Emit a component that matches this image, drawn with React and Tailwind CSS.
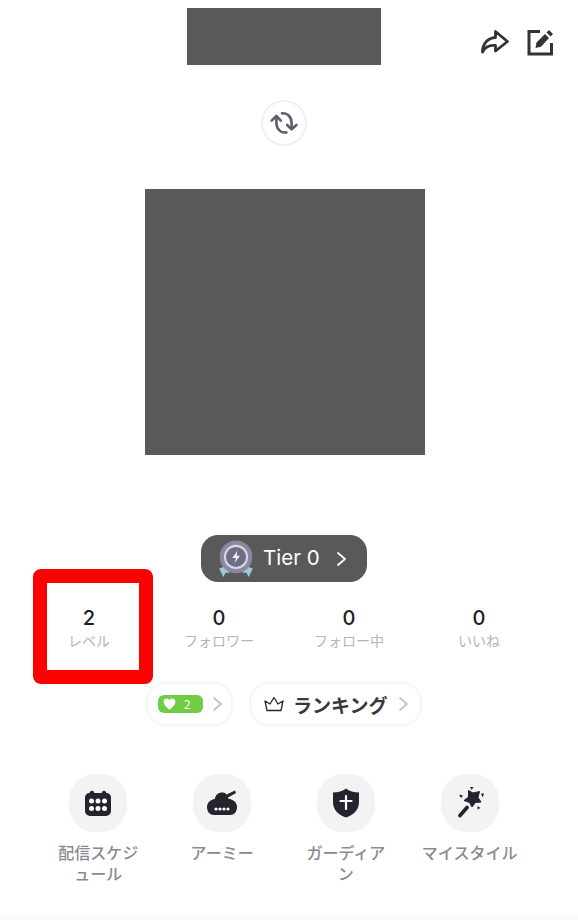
const jp = '"Noto Sans CJK JP", "Noto Sans", sans-serif'

const ShareIcon = () => (
  <svg width="30" height="26" viewBox="0 0 30 26" fill="none" stroke="#333333" strokeWidth="2.8" strokeLinejoin="round">
    <path d="M15.5 2.5 L27.5 12.5 L15.5 22 V16.5 C10 16 5 18 2.5 23 C2.5 14.5 8 9 15.5 8.5 Z" />
  </svg>
)

const EditIcon = () => (
  <svg width="28" height="28" viewBox="0 0 28 28" fill="none">
    <path d="M14 3.5 H3 V26 H25.5 V15" stroke="#333333" strokeWidth="3" />
    <path d="M9.5 20 L10.5 14.5 L19 6 L23 10 L15 18.8 Z" fill="#333333" />
    <path d="M20.5 4.5 L23 2 L27 6 L24.5 8.5 Z" fill="#333333" />
  </svg>
)

const SyncIcon = () => (
  <svg width="30" height="24" viewBox="0 0 30 24" fill="none" stroke="#5f5c6b" strokeWidth="2.6" strokeLinecap="round" strokeLinejoin="round">
    <path d="M13 2.4 C18 1.6 22.6 5.6 22.6 12 L22.6 17" />
    <path d="M18.2 14 L22.6 18.4 L27.4 14" />
    <path d="M17.4 21.4 C12 22.4 7.4 18 7.4 12 L7.4 6.5" />
    <path d="M2.6 9.6 L7.4 5 L11.8 9.6" />
  </svg>
)

const Medal = () => (
  <svg width="40" height="40" viewBox="0 0 38 38">
    <path d="M3 28 L9 26 L13 32 L9 32 L7 36 Z" fill="#9ccdd6" />
    <path d="M35 28 L29 26 L25 32 L29 32 L31 36 Z" fill="#9ccdd6" />
    <circle cx="19" cy="17" r="15.5" fill="#8b88a5" />
    <circle cx="19" cy="17" r="11.5" fill="#d8d7e2" />
    <circle cx="19" cy="17" r="9.5" fill="#6f6c86" />
    <path d="M20.5 11 L15.5 18 H19 L17.5 23 L22.8 15.8 H19.4 Z" fill="#f4f4f8" />
  </svg>
)

const Chevron = ({ className = '' }) => (
  <svg className={className} width="11" height="16" viewBox="0 0 11 16" fill="none" stroke="currentColor" strokeWidth="1.8" strokeLinecap="round" strokeLinejoin="round">
    <path d="M2 2 L9 8 L2 14" />
  </svg>
)

const CrownIcon = () => (
  <svg width="20" height="16" viewBox="0 0 20 16" fill="none" stroke="#26222e" strokeWidth="1.3" strokeLinejoin="round">
    <path d="M3 14.5 L1 5 L6 8 L10 1.5 L14 8 L19 5 L17 14.5 Z" />
  </svg>
)

const CalendarIcon = () => (
  <svg width="26" height="26" viewBox="0 0 26 26">
    <path d="M5 2 a2.2 2.2 0 0 1 4 0 L9.3 3 H16.7 L17 2 a2.2 2.2 0 0 1 4 0 L21.5 3 A4.5 4.5 0 0 1 26 7.5 V21 A5 5 0 0 1 21 26 H5 A5 5 0 0 1 0 21 V7.5 A4.5 4.5 0 0 1 4.5 3 Z" fill="#26222e" />
    {[6.5, 13, 19.5].map(x => [11, 18.5].map(y => (
      <circle key={`${x}-${y}`} cx={x} cy={y} r="2.5" fill="#ffffff" />
    )))}
  </svg>
)

const TankIcon = () => (
  <svg width="30" height="26" viewBox="0 0 30 26">
    <path d="M0 17 C0 11 6 8 15 8 C24 8 30 11 30 17 C30 22 27 25 23 25 H7 C3 25 0 22 0 17 Z" fill="#26222e" />
    <path d="M8 10 C8 4.5 11.5 2.5 15 2.5 C17 2.5 18.5 3 19.5 4.5 L28 0.5 L29 3 L21 7.5 V10.5 Z" fill="#26222e" />
    {[9, 13, 17, 21].map(x => (
      <circle key={x} cx={x} cy="19" r="1.6" fill="#ffffff" />
    ))}
  </svg>
)

const ShieldIcon = () => (
  <svg width="26" height="30" viewBox="0 0 26 30">
    <path d="M13 0.5 C16 3 21 4.5 26 4.5 V14 C26 22 20 27.5 13 29.5 C6 27.5 0 22 0 14 V4.5 C5 4.5 10 3 13 0.5 Z" fill="#26222e" />
    <path d="M13 8 V21 M7.5 13 H18.5" stroke="#ffffff" strokeWidth="2.2" strokeLinecap="round" />
  </svg>
)

const WandIcon = () => (
  <svg width="28" height="32" viewBox="0 0 28 32">
    <path d="M12.5 3.5 L17 6 L23.5 4.5 L22 10.5 L25 15 L19.5 15.5 L16 20 L13.5 15.5 L8 13.5 L12.5 10 Z" fill="#26222e" stroke="#26222e" strokeLinejoin="round" />
    <path d="M4 28.5 L11 20.5" stroke="#26222e" strokeWidth="3.8" strokeLinecap="round" />
    <path d="M14 0 H17.5 L15.7 3 Z" fill="#26222e" />
    <path d="M25 6.5 L28 6.5 L26.7 10.5 Z" fill="#26222e" />
    <path d="M3 7.5 L7 8.5 L5 11 Z" fill="#26222e" />
    <path d="M21.5 19 L24.5 21 L21.5 22.5 Z" fill="#26222e" />
  </svg>
)

const stats = [
  { value: 2, label: 'レベル' },
  { value: 0, label: 'フォロワー' },
  { value: 0, label: 'フォロー中' },
  { value: 0, label: 'いいね' },
]

const menus = [
  { label: '配信スケジュール', icon: <CalendarIcon />, width: 'w-[86px]' },
  { label: 'アーミー', icon: <TankIcon />, width: 'w-[86px]' },
  { label: 'ガーディアン', icon: <ShieldIcon />, width: 'w-[86px]' },
  { label: 'マイスタイル', icon: <WandIcon />, width: 'w-[100px]' },
]

export default function App() {
  return (
    <div className="relative h-[920px] w-[578px] overflow-hidden bg-white" style={{ fontFamily: jp }}>
      <div className="w-[568px]">
        {/* Header */}
        <div className="grid grid-cols-[1fr_194px_1fr] pt-2">
          <div />
          <div className="h-[57px] bg-[#595959]" />
          <div className="flex items-center justify-end gap-[16px] pr-[14px] pt-[11px]">
            <ShareIcon />
            <EditIcon />
          </div>
        </div>

        {/* Avatar */}
        <div className="mt-[35px] flex justify-center">
          <div className="flex h-[46px] w-[46px] items-center justify-center rounded-full border-2 border-[#f0f0f2]">
            <SyncIcon />
          </div>
        </div>
        <div className="mt-[43px] flex justify-center pl-[2px]">
          <div className="h-[266px] w-[280px] bg-[#595959]" />
        </div>

        {/* Tier */}
        <div className="mt-[80px] flex justify-center">
          <div className="flex h-[47px] w-[166px] items-center rounded-[17px] bg-[#595959] pl-[15px] text-white">
            <Medal />
            <span className="ml-[7px] text-[20.5px] leading-none" style={{ fontFamily: 'Inter, sans-serif' }}>Tier 0</span>
            <Chevron className="ml-[16px] text-white" />
          </div>
        </div>

        {/* Stats */}
        <div className="mx-auto mt-[24px] grid w-[520px] grid-cols-4">
          {stats.map(s => (
            <div key={s.label} className="flex flex-col items-center">
              <span className="text-[20px] font-medium leading-[24px] text-[#1f1c26]" style={{ fontFamily: 'Inter, sans-serif' }}>{s.value}</span>
              <span className="text-[14px] leading-[20px] text-[#b5b5b5]">{s.label}</span>
            </div>
          ))}
        </div>

        {/* Chips */}
        <div className="mt-[32px] flex justify-center gap-4">
          <div className="flex h-[44px] w-[87px] items-center rounded-[20px] border-2 border-[#f6f6f6] pl-[10px]">
            <div className="flex h-[18px] w-[45px] items-center rounded-[6px] bg-[#70cc42] pl-[5px] text-white">
              <svg width="13" height="12" viewBox="0 0 24 22" fill="#ffffff">
                <path d="M12 21.5 C5 15.5 1 12 1 7 C1 3.5 3.5 1 6.8 1 C8.8 1 10.8 2 12 4 C13.2 2 15.2 1 17.2 1 C20.5 1 23 3.5 23 7 C23 12 19 15.5 12 21.5 Z" />
              </svg>
              <span className="ml-[8px] text-[12px] leading-none">2</span>
            </div>
            <Chevron className="ml-[9px] text-[#c4c4c4]" />
          </div>
          <div className="flex h-[44px] w-[173px] items-center rounded-[20px] border-2 border-[#f6f6f6] pl-[13px]">
            <CrownIcon />
            <span className="ml-[9px] text-[19px] font-bold leading-none text-[#3a3742]">ランキング</span>
            <Chevron className="ml-[11px] text-[#c4c4c4]" />
          </div>
        </div>

        {/* Menu */}
        <div className="mx-auto mt-[48px] grid w-[495px] grid-cols-4">
          {menus.map(m => (
            <div key={m.label} className="flex flex-col items-center">
              <div className="flex h-[58px] w-[58px] items-center justify-center rounded-[26px] bg-[#f3f3f3]">
                {m.icon}
              </div>
              <span className={`mt-[10px] break-all text-center text-[16px] font-medium leading-[21px] text-[#8b8893] ${m.width}`}>{m.label}</span>
            </div>
          ))}
        </div>
      </div>

      {/* Highlight marker */}
      <div className="absolute left-[33px] top-[569px] h-[115px] w-[120px] rounded-[8px] border-[14px] border-[#ff0000]" />
      <div className="absolute bottom-0 left-0 h-[4px] w-full bg-[#fafafa]" />
    </div>
  )
}
